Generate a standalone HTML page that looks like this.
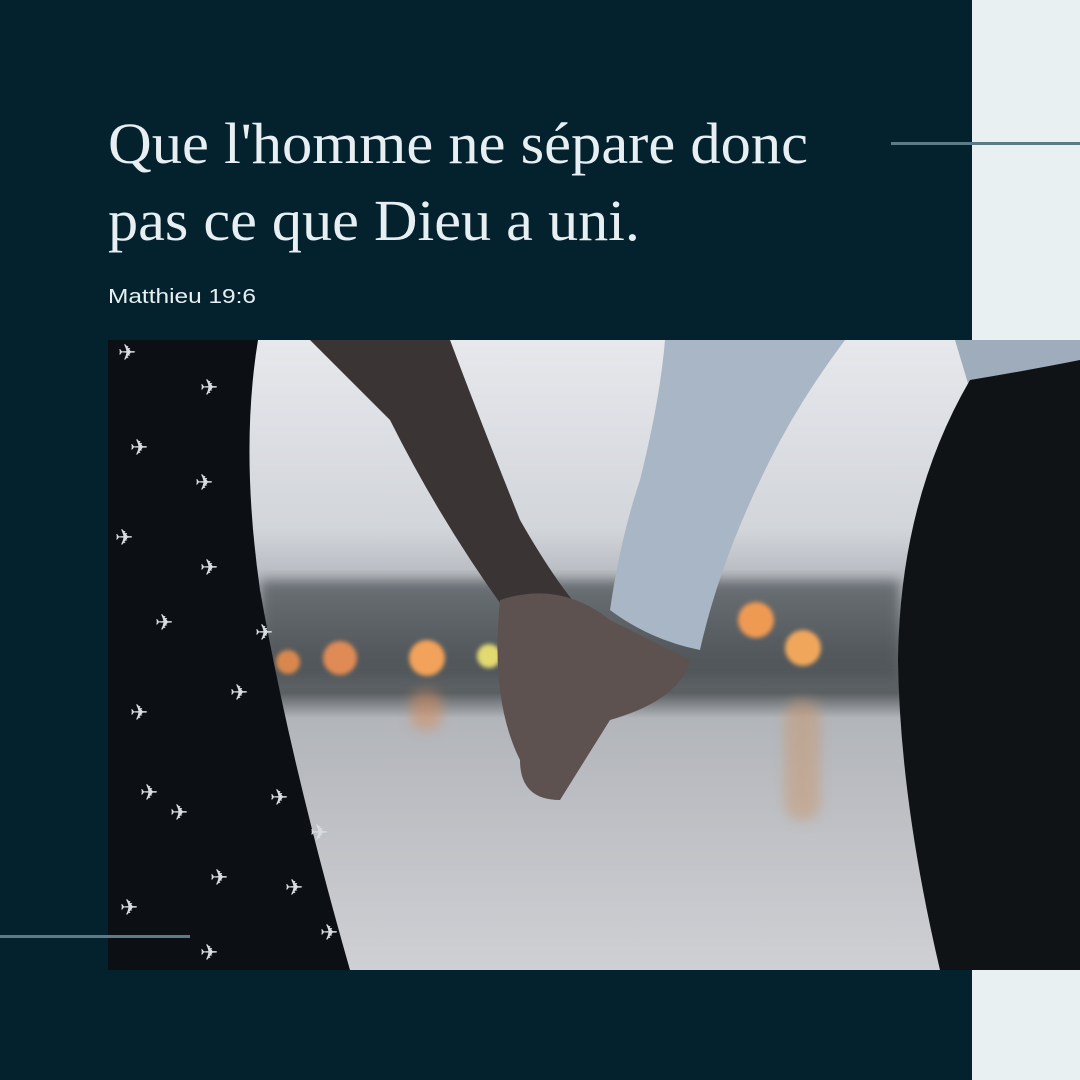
<!DOCTYPE html>
<html><head><meta charset="utf-8"><style>
html,body{margin:0;padding:0}
body{width:1080px;height:1080px;background:#03222d;position:relative;overflow:hidden}
</style></head><body>
<svg width="1080" height="1080" viewBox="0 0 1080 1080" style="position:absolute;left:0;top:0">
<defs>
<linearGradient id="sky" x1="0" y1="0" x2="0" y2="1">
<stop offset="0" stop-color="#e6e8ec"/><stop offset="0.3" stop-color="#d2d5da"/><stop offset="0.4" stop-color="#aeb2b8"/><stop offset="0.5" stop-color="#6a6f73"/><stop offset="0.56" stop-color="#5a5f62"/><stop offset="0.6" stop-color="#b2b5ba"/><stop offset="1" stop-color="#cfd0d4"/>
</linearGradient>
<filter id="bl"><feGaussianBlur stdDeviation="6"/></filter>
<filter id="bl2"><feGaussianBlur stdDeviation="2"/></filter>
</defs>
<rect x="972" y="0" width="108" height="1080" fill="#e9f0f2"/>
<rect x="891" y="142" width="189" height="3" fill="#5b7c87"/>
<rect x="108" y="340" width="972" height="630" fill="url(#sky)"/>
<g filter="url(#bl)" opacity="0.7"><rect x="260" y="580" width="640" height="100" fill="#4a5053"/></g>
<g filter="url(#bl2)">
<circle cx="427" cy="658" r="18" fill="#f2a25a"/><circle cx="340" cy="658" r="17" fill="#e08a55"/><circle cx="288" cy="662" r="12" fill="#d9884e"/>
<circle cx="489" cy="656" r="12" fill="#e2d970"/><circle cx="756" cy="620" r="18" fill="#ef9a52"/><circle cx="803" cy="648" r="18" fill="#f0a75c"/>
</g>
<g filter="url(#bl)" opacity="0.5"><rect x="785" y="700" width="35" height="120" rx="15" fill="#c9976e"/><rect x="410" y="690" width="32" height="40" rx="15" fill="#d98a5a"/></g>
<path d="M108 340 H258 Q240 450 260 590 Q290 760 350 970 H108Z" fill="#0c0f13"/>
<path d="M310 340 H450 Q480 420 520 520 Q560 590 590 620 L560 720 Q540 660 505 610 Q440 520 390 420Z" fill="#3a3434"/>
<path d="M500 600 Q560 580 610 620 Q650 640 690 660 Q680 700 610 720 L560 800 Q520 800 520 760 Q490 700 500 600Z" fill="#5d524f"/>
<path d="M665 340 H845 Q800 400 770 460 Q720 560 700 650 Q650 640 610 610 Q620 540 640 480 Q660 400 665 340Z" fill="#a9b6c6"/>
<path d="M955 340 H1080 V380 Q1020 390 970 390Z" fill="#9eacbc"/>
<path d="M970 380 Q1030 370 1080 360 V970 H940 Q900 800 898 660 Q900 500 970 380Z" fill="#101315"/>
<g fill="#d8dde2" font-size="22" font-family="DejaVu Sans">
<text x="118" y="360">✈</text><text x="200" y="395">✈</text><text x="130" y="455">✈</text><text x="195" y="490">✈</text><text x="115" y="545">✈</text><text x="200" y="575">✈</text><text x="155" y="630">✈</text><text x="230" y="700">✈</text><text x="130" y="720">✈</text><text x="255" y="640">✈</text><text x="140" y="800">✈</text><text x="170" y="820">✈</text><text x="270" y="805">✈</text><text x="210" y="885">✈</text><text x="285" y="895">✈</text><text x="120" y="915">✈</text><text x="200" y="960">✈</text><text x="320" y="940">✈</text><text x="310" y="840">✈</text>
</g>
<rect x="0" y="935" width="190" height="3" fill="#5b7c87"/>
<g font-family="Liberation Serif, serif" fill="#e8eff2" font-size="58">
<text x="108" y="163" textLength="700" lengthAdjust="spacingAndGlyphs">Que l'homme ne sépare donc</text>
<text x="108" y="240" textLength="532" lengthAdjust="spacingAndGlyphs">pas ce que Dieu a uni.</text>
</g>
<text x="108" y="303" font-family="Liberation Sans, sans-serif" font-size="20" fill="#e8eff2" textLength="148" lengthAdjust="spacingAndGlyphs">Matthieu 19:6</text>
</svg>
</body></html>
